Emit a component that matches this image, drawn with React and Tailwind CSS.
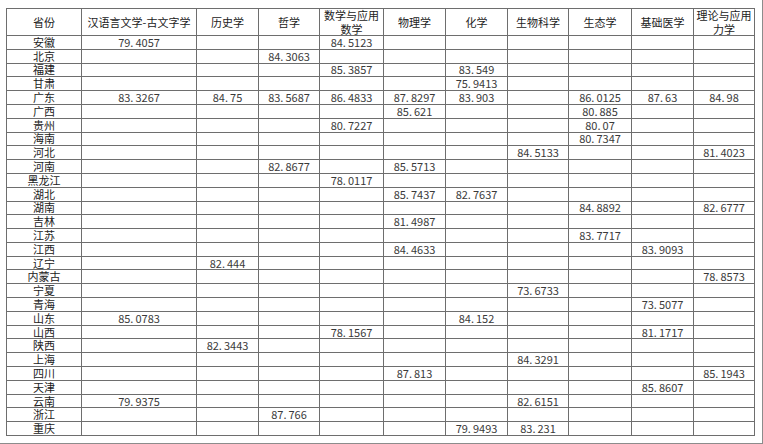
import React from "react";

const cols = [
  "汉语言文学-古文字学",
  "历史学",
  "哲学",
  "数学与应用数学",
  "物理学",
  "化学",
  "生物科学",
  "生态学",
  "基础医学",
  "理论与应用力学",
];

// index: 0 汉语, 1 历史, 2 哲学, 3 数学, 4 物理, 5 化学, 6 生物, 7 生态, 8 基础医学, 9 力学
const rows = [
  ["安徽", { 0: "79.4057", 3: "84.5123" }],
  ["北京", { 2: "84.3063" }],
  ["福建", { 3: "85.3857", 5: "83.549" }],
  ["甘肃", { 5: "75.9413" }],
  ["广东", { 0: "83.3267", 1: "84.75", 2: "83.5687", 3: "86.4833", 4: "87.8297", 5: "83.903", 7: "86.0125", 8: "87.63", 9: "84.98" }],
  ["广西", { 4: "85.621", 7: "80.885" }],
  ["贵州", { 3: "80.7227", 7: "80.07" }],
  ["海南", { 7: "80.7347" }],
  ["河北", { 6: "84.5133", 9: "81.4023" }],
  ["河南", { 2: "82.8677", 4: "85.5713" }],
  ["黑龙江", { 3: "78.0117" }],
  ["湖北", { 4: "85.7437", 5: "82.7637" }],
  ["湖南", { 7: "84.8892", 9: "82.6777" }],
  ["吉林", { 4: "81.4987" }],
  ["江苏", { 7: "83.7717" }],
  ["江西", { 4: "84.4633", 8: "83.9093" }],
  ["辽宁", { 1: "82.444" }],
  ["内蒙古", { 9: "78.8573" }],
  ["宁夏", { 6: "73.6733" }],
  ["青海", { 8: "73.5077" }],
  ["山东", { 0: "85.0783", 5: "84.152" }],
  ["山西", { 3: "78.1567", 8: "81.1717" }],
  ["陕西", { 1: "82.3443" }],
  ["上海", { 6: "84.3291" }],
  ["四川", { 4: "87.813", 9: "85.1943" }],
  ["天津", { 8: "85.8607" }],
  ["云南", { 0: "79.9375", 6: "82.6151" }],
  ["浙江", { 2: "87.766" }],
  ["重庆", { 5: "79.9493", 6: "83.231" }],
];

function Num({ v }) {
  if (!v) return null;
  const [a, b] = v.split(".");
  return (
    <span>
      {a}
      <span className="mr-[2px]">.</span>
      {b}
    </span>
  );
}

const cell =
  "border-r border-b border-[#6e6e6e] flex items-center justify-center whitespace-nowrap min-h-0";

export default function App() {
  return (
    <div
      className="w-[763px] h-[444px] bg-white border-r border-b border-[#8c8c8c]"
      style={{ fontFamily: '"Noto Sans CJK SC", "Noto Sans", sans-serif' }}
    >
      <div className="pt-[8px] pl-[6px]">
        <div className="grid grid-cols-[75px_115px_62px_61px_64px_62px_62px_61px_63px_62px_61px] grid-rows-[27px_repeat(29,minmax(0,1fr))] h-[428px] w-[749px] border-l border-t border-[#6e6e6e] text-[11px] leading-[13px]">
          <div className={cell + " text-[#222]"}>省份</div>
          {cols.map((c) => (
            <div key={c} className={cell + " text-[#222] text-center"}>
              {c === "数学与应用数学" ? (
                <span className="leading-[14px] whitespace-normal">
                  数学与应用
                  <br />
                  数学
                </span>
              ) : c === "理论与应用力学" ? (
                <span className="leading-[14px] whitespace-normal">
                  理论与应用
                  <br />
                  力学
                </span>
              ) : (
                c
              )}
            </div>
          ))}
          {rows.map(([name, vals]) => (
            <React.Fragment key={name}>
              <div className={cell + " text-[#222]"}>{name}</div>
              {cols.map((c, i) => (
                <div key={c} className={cell + " text-[#3a3a3a]"}>
                  <Num v={vals[i]} />
                </div>
              ))}
            </React.Fragment>
          ))}
        </div>
      </div>
    </div>
  );
}
